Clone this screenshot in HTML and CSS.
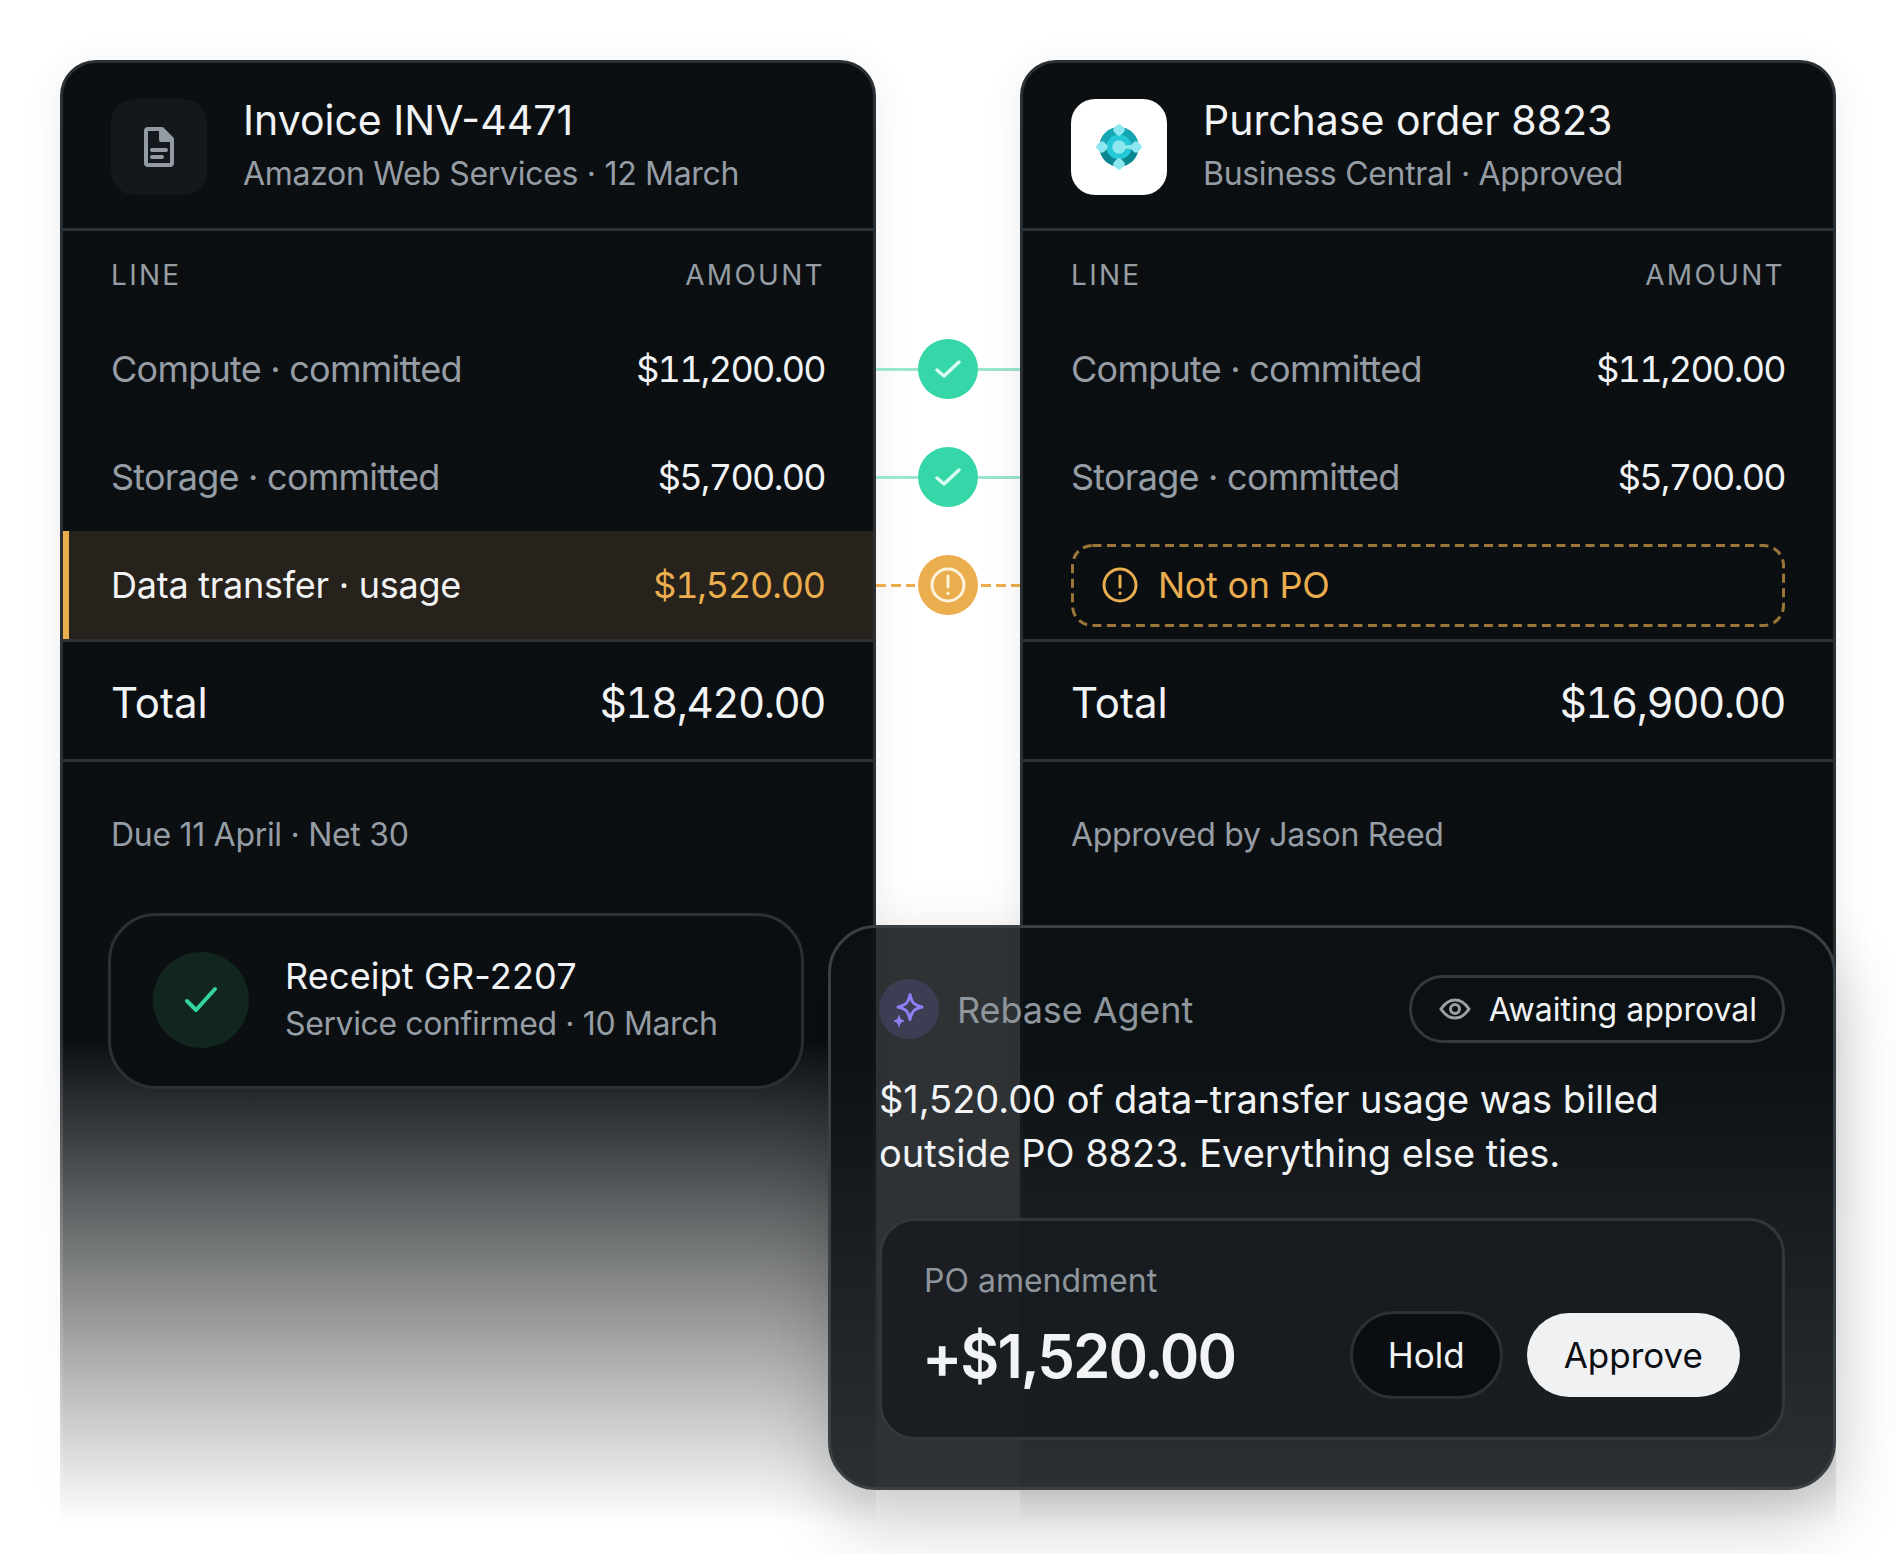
FILE: index.html
```html
<!DOCTYPE html>
<html lang="en">
<head>
    <meta charset="UTF-8">
    <title>Invoice match</title>
    <link rel="stylesheet" href="styles.css">
</head>
<body>
    <div class="stage">
        <div class="compare">
            <section class="card">
                <header class="card-head">
                    <div class="logo logo-dark">
                        <svg width="32" height="40" viewBox="0 0 32 40" fill="none" stroke="#939aa1" stroke-width="4" stroke-linejoin="round" stroke-linecap="round">
                            <path d="M3 4a2 2 0 0 1 2-2h14l10 10v24a2 2 0 0 1-2 2H5a2 2 0 0 1-2-2z"/>
                            <path d="M18 3v10h10" fill="#939aa1"/>
                            <path d="M9 23h14M9 30h10"/>
                        </svg>
                    </div>
                    <div>
                        <div class="card-title">Invoice INV-4471</div>
                        <div class="card-sub">Amazon Web Services · 12 March</div>
                    </div>
                </header>
                <div class="row-head"><span>LINE</span><span>AMOUNT</span></div>
                <div class="row"><span class="row-name">Compute · committed</span><span class="sum">$11,200.00</span></div>
                <div class="row"><span class="row-name">Storage · committed</span><span class="sum">$5,700.00</span></div>
                <div class="row row-flag"><span class="flag-name">Data transfer · usage</span><span class="sum amber">$1,520.00</span></div>
                <div class="total"><span>Total</span><span class="sum total-sum">$18,420.00</span></div>
                <div class="foot">Due 11 April · Net 30</div>
                <div class="receipt">
                    <div class="receipt-icon">
                        <svg width="36" height="36" viewBox="0 0 36 36" fill="none" stroke="#34d3a0" stroke-width="4" stroke-linecap="round" stroke-linejoin="round"><path d="M4 19l9 9L32 7"/></svg>
                    </div>
                    <div>
                        <div class="receipt-title">Receipt GR-2207</div>
                        <div class="card-sub receipt-sub">Service confirmed · 10 March</div>
                    </div>
                </div>
            </section>

            <div class="links">
                <div class="link link-ok">
                    <span class="dot dot-ok"><svg width="28" height="28" viewBox="0 0 28 28" fill="none" stroke="#d8fbf0" stroke-width="3.500" stroke-linecap="round" stroke-linejoin="round"><path d="M3 15l7 6L25 7"/></svg></span>
                </div>
                <div class="link link-ok">
                    <span class="dot dot-ok"><svg width="28" height="28" viewBox="0 0 28 28" fill="none" stroke="#d8fbf0" stroke-width="3.500" stroke-linecap="round" stroke-linejoin="round"><path d="M3 15l7 6L25 7"/></svg></span>
                </div>
                <div class="link link-warn">
                    <span class="dot dot-warn"><svg width="36" height="36" viewBox="0 0 36 36" fill="none" stroke="#fff3dc" stroke-width="3" stroke-linecap="round"><circle cx="18" cy="18" r="16"/><path d="M18 9v11"/><path d="M18 26v.5"/></svg></span>
                </div>
            </div>

            <section class="card">
                <header class="card-head">
                    <div class="logo logo-light">
                        <svg width="50" height="50" viewBox="0 0 56 56">
                            <circle cx="28" cy="28" r="22" fill="#0b8791"/>
                            <path d="M6 28a22 22 0 0 1 44 0z" fill="#14a6b2"/>
                            <circle cx="28" cy="28" r="14" fill="#25c8d6"/>
                            <circle cx="28" cy="28" r="7.500" fill="#8ce8ee"/>
                            <rect x="28" y="26" width="20" height="4" fill="#8ce8ee"/>
                            <rect x="22.500" y="3.500" width="11" height="11" rx="3.500" transform="rotate(45 28 9)" fill="#8ce8ee"/>
                            <rect x="22.500" y="41.500" width="11" height="11" rx="3.500" transform="rotate(45 28 47)" fill="#8ce8ee"/>
                            <rect x="3.500" y="22.500" width="11" height="11" rx="3.500" transform="rotate(45 9 28)" fill="#8ce8ee"/>
                            <rect x="41.500" y="22.500" width="11" height="11" rx="3.500" transform="rotate(45 47 28)" fill="#8ce8ee"/>
                        </svg>
                    </div>
                    <div>
                        <div class="card-title">Purchase order 8823</div>
                        <div class="card-sub">Business Central · Approved</div>
                    </div>
                </header>
                <div class="row-head"><span>LINE</span><span>AMOUNT</span></div>
                <div class="row"><span class="row-name">Compute · committed</span><span class="sum">$11,200.00</span></div>
                <div class="row"><span class="row-name">Storage · committed</span><span class="sum">$5,700.00</span></div>
                <div class="row row-missing">
                    <div class="missing">
                        <svg class="missing-line" width="714" height="83" viewBox="0 0 714 83" fill="none"><rect x="1.500" y="1.500" width="711" height="80" rx="20" stroke="#ebae4f" stroke-opacity="0.65" stroke-width="3" stroke-dasharray="9 5.500"/></svg>
                        <svg width="36" height="36" viewBox="0 0 36 36" fill="none" stroke="#ebae4f" stroke-width="3" stroke-linecap="round"><circle cx="18" cy="18" r="16"/><path d="M18 9v11"/><path d="M18 26v.5"/></svg>
                        <span class="missing-text">Not on PO</span>
                    </div>
                </div>
                <div class="total"><span>Total</span><span class="sum total-sum">$16,900.00</span></div>
                <div class="foot">Approved by Jason Reed</div>
            </section>
        </div>

        <div class="fade"></div>

        <aside class="agent">
            <div class="agent-head">
                <div class="agent-name">
                    <span class="agent-badge">
                        <svg width="40" height="40" viewBox="0 0 40 40" fill="none" stroke="#8f7ff5" stroke-width="3" stroke-linejoin="round">
                            <path d="M21 5.500c1.500 8 4 10.500 12 12.500c-8 2-10.500 4.500-12 12.500c-1.500-8-4-10.500-12-12.500c8-2 10.500-4.500 12-12.500z"/>
                            <path d="M10 26.500c.7 3.200 1.600 4.600 5 5.500c-3.400.9-4.300 2.300-5 5.500c-.7-3.200-1.600-4.600-5-5.500c3.400-.9 4.300-2.300 5-5.500z" fill="#8f7ff5" stroke-width="1"/>
                        </svg>
                    </span>
                    <span class="agent-label">Rebase Agent</span>
                </div>
                <div class="chip">
                    <svg width="32" height="24" viewBox="0 0 32 24" fill="none" stroke="#9aa0a6" stroke-width="3"><path d="M2 12c4-6 8.500-9 14-9s10 3 14 9c-4 6-8.500 9-14 9S6 18 2 12z"/><circle cx="16" cy="12" r="4.500"/></svg>
                    <span>Awaiting approval</span>
                </div>
            </div>
            <p class="agent-text">$1,520.00 of data-transfer usage was billed outside PO 8823. Everything else ties.</p>
            <div class="amend">
                <div>
                    <div class="amend-label">PO amendment</div>
                    <div class="amend-sum">+$1,520.00</div>
                </div>
                <div class="amend-btns">
                    <button class="btn btn-hold">Hold</button>
                    <button class="btn btn-approve">Approve</button>
                </div>
            </div>
        </aside>
    </div>
</body>
</html>
```

FILE: styles.css
```css
* {
    box-sizing: border-box;
}

body {
    margin: 0;
    background: #fff;
    color: #f1f3f5;
    font-family: 'Inter', sans-serif;
}

.stage {
    position: relative;
    width: 1896px;
    height: 1554px;
    padding: 60px;
    overflow: hidden;
}

.compare {
    display: grid;
    grid-template-columns: 816px 144px 816px;
    height: 1480px;
}

.card {
    background: #0b0f12;
    border: 3px solid #2b3034;
    border-radius: 36px 36px 0 0;
    box-shadow: 0 8px 40px rgba(0, 0, 0, 0.08);
}

.card-head {
    display: flex;
    align-items: center;
    gap: 36px;
    height: 168px;
    padding: 0 48px;
    border-bottom: 3px solid #2b3034;
}

.logo {
    display: flex;
    align-items: center;
    justify-content: center;
    width: 96px;
    height: 96px;
    margin-top: 3px;
    border-radius: 24px;
    flex-shrink: 0;
}

.logo-dark {
    background: #13181d;
}

.logo-light {
    background: #fff;
}

.card-title {
    font-size: 41px;
    line-height: 54px;
}

.card-sub {
    margin-top: 3px;
    font-size: 32px;
    line-height: 48px;
    letter-spacing: -0.3px;
    color: #969da4;
}

.row-head {
    display: flex;
    justify-content: space-between;
    align-items: center;
    height: 84px;
    padding: 3px 48px 0;
    font-size: 28px;
    letter-spacing: 2.3px;
    color: #969da4;
}

.row {
    display: flex;
    justify-content: space-between;
    align-items: center;
    height: 108px;
    padding: 0 48px;
    font-size: 36px;
}

.row-name {
    letter-spacing: -0.75px;
    color: #969da4;
}

.sum {
    font-variant-numeric: tabular-nums;
    letter-spacing: -1.7px;
}

.total-sum {
    letter-spacing: -1.5px;
}

.row-flag {
    height: 111px;
    background: #27221b;
    box-shadow: inset 6px 0 0 #ebae4f;
    border-bottom: 3px solid #2b3034;
}

.flag-name {
    letter-spacing: -0.25px;
}

.amber {
    color: #ebae4f;
    letter-spacing: -1.2px;
}

.row-missing {
    height: 111px;
    border-bottom: 3px solid #2b3034;
}

.missing {
    position: relative;
    display: flex;
    align-items: center;
    gap: 20px;
    width: 100%;
    height: 83px;
    padding: 0 31px;
    color: #ebae4f;
}

.missing-line {
    position: absolute;
    left: 0;
    top: 0;
}

.missing-text {
    letter-spacing: -0.3px;
}

.total {
    display: flex;
    justify-content: space-between;
    align-items: center;
    height: 120px;
    padding: 3px 48px 0;
    font-size: 42px;
    border-bottom: 3px solid #2b3034;
}

.foot {
    padding: 0 48px;
    margin-top: 51px;
    font-size: 32px;
    line-height: 44px;
    letter-spacing: -0.3px;
    color: #969da4;
}

.receipt {
    position: relative;
    z-index: 2;
    display: flex;
    align-items: center;
    gap: 36px;
    width: 696px;
    height: 176px;
    margin: 56px 0 0 45px;
    padding: 0 42px 2px;
    background: #0b0f12;
    border: 3px solid #2b3034;
    border-radius: 48px;
}

.receipt-icon {
    display: flex;
    align-items: center;
    justify-content: center;
    width: 96px;
    height: 96px;
    border-radius: 50%;
    background: #11261f;
    flex-shrink: 0;
}

.receipt-title {
    font-size: 36px;
    line-height: 48px;
    letter-spacing: 0.15px;
}

.receipt-sub {
    margin-top: 0;
    letter-spacing: -0.38px;
}

.links {
    padding-top: 255px;
}

.link {
    display: flex;
    align-items: center;
    justify-content: center;
    height: 108px;
}

.link-ok {
    background: linear-gradient(#9ce5cf, #9ce5cf) center / 100% 3px no-repeat;
}

.link-warn {
    background: repeating-linear-gradient(90deg, #ebae4f 0 10px, transparent 10px 15px) center / 100% 3px no-repeat;
}

.dot {
    display: flex;
    align-items: center;
    justify-content: center;
    width: 60px;
    height: 60px;
    border-radius: 50%;
}

.dot-ok {
    background: #35d6a8;
}

.dot-warn {
    background: #ebae4f;
    box-shadow: 0 0 0 3px #fff;
}

.fade {
    position: absolute;
    z-index: 1;
    left: 0;
    right: 0;
    top: 1040px;
    height: 514px;
    background: linear-gradient(rgba(255, 255, 255, 0), #fff 94%);
}

.agent {
    position: absolute;
    z-index: 3;
    left: 828px;
    top: 925px;
    width: 1008px;
    height: 565px;
    padding: 47px 48px;
    background: rgba(12, 16, 20, 0.86);
    border: 3px solid #3a3f43;
    border-radius: 48px;
    box-shadow: 0 30px 70px rgba(0, 0, 0, 0.22);
}

.agent-head {
    display: flex;
    justify-content: space-between;
    align-items: center;
    height: 68px;
}

.agent-name {
    display: flex;
    align-items: center;
    gap: 18px;
    font-size: 36px;
    letter-spacing: -0.1px;
    color: #8e959b;
}

.agent-label {
    padding-top: 2px;
}

.agent-badge {
    display: flex;
    align-items: center;
    justify-content: center;
    width: 60px;
    height: 60px;
    border-radius: 50%;
    background: rgba(143, 127, 245, 0.16);
}

.chip {
    display: flex;
    align-items: center;
    gap: 18px;
    height: 68px;
    padding: 0 25px 0 27px;
    border: 3px solid #34393d;
    border-radius: 34px;
    font-size: 32px;
}

.agent-text {
    margin: 29px 0 0;
    font-size: 38px;
    line-height: 54px;
    letter-spacing: -0.05px;
}

.amend {
    display: flex;
    justify-content: space-between;
    align-items: flex-start;
    height: 222px;
    margin-top: 38px;
    padding: 38px 42px 0;
    background: rgba(22, 27, 32, 0.85);
    border: 3px solid #32373b;
    border-radius: 36px;
}

.amend-label {
    font-size: 32px;
    line-height: 44px;
    color: #8e959b;
}

.amend-sum {
    margin-top: 15px;
    margin-left: -2px;
    font-size: 60px;
    line-height: 76px;
    font-weight: 600;
    letter-spacing: -2px;
}

.amend-btns {
    display: flex;
    align-items: center;
    gap: 24px;
    margin-top: 52px;
}

.btn {
    height: 88px;
    border-radius: 44px;
    font-family: inherit;
    font-size: 35px;
}

.btn-hold {
    padding: 0 35px;
    background: #0a0e11;
    border: 3px solid #2b3034;
    color: #f1f3f5;
}

.btn-approve {
    height: 84px;
    padding: 0 37px;
    background: #f0f1f3;
    border: none;
    color: #0b0f12;
}
```
